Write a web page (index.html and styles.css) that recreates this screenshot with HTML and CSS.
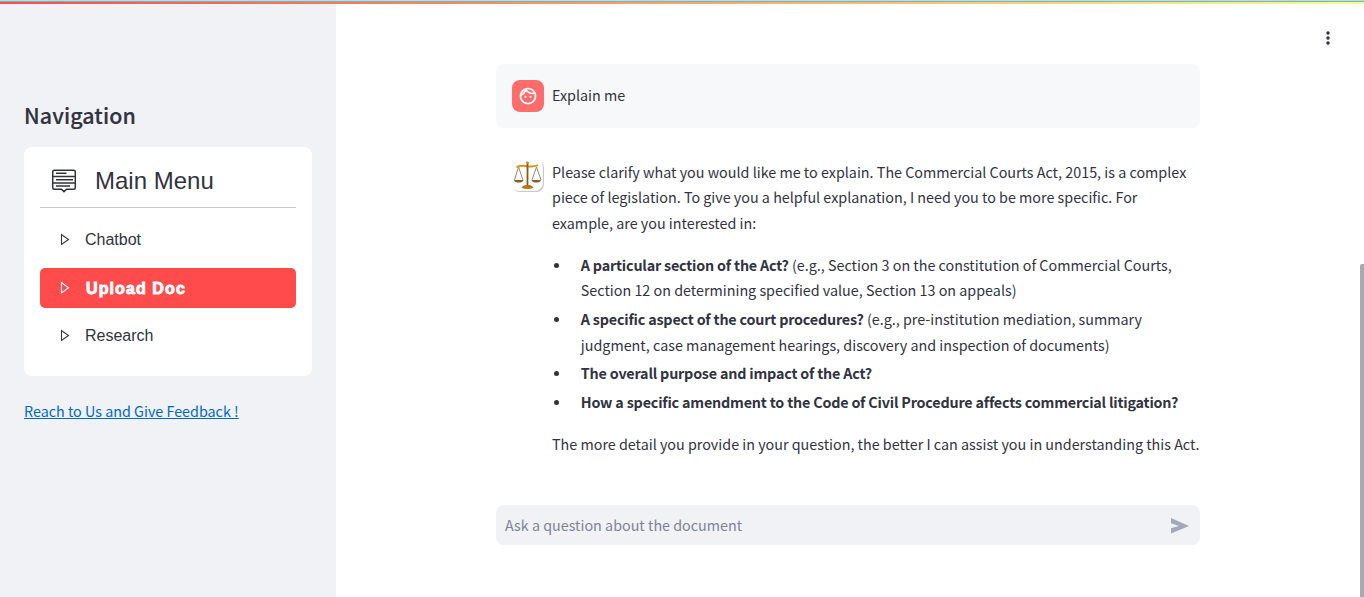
FILE: index.html
```html
<!DOCTYPE html>
<html lang="en">
<head>
<meta charset="utf-8">
<title>Chatbot</title>
<link rel="stylesheet" href="styles.css">
</head>
<body>
<div class="app">
  <div class="decoration"></div>
  <aside class="sidebar">
    <h2 class="sidebar-title">Navigation</h2>
    <nav class="menu">
      <div class="menu-header">
        <svg class="menu-icon" width="26" height="26" viewBox="0 0 26 26" fill="none" stroke="#31333f" stroke-width="1.5"><path d="M3.2 2.2h19.6q1.5 0 1.5 1.5v16q0 1.5-1.500 1.500h-7.300L13 23.600l-2.500-2.400H3.200q-1.500 0-1.500-1.500v-16q0-1.500 1.500-1.500zM1.700 8.500h22.600M1.700 15h22.600M5 5.300h10.500M5 11.800h17M5 18h14"/></svg>
        <span class="menu-title">Main Menu</span>
      </div>
      <hr class="menu-rule">
      <a class="menu-item"><svg class="caret" width="10" height="14" viewBox="0 0 10 14"><path d="M1.5 1.5v10L8.500 6.500z"/></svg>Chatbot</a>
      <a class="menu-item active"><svg class="caret" width="10" height="14" viewBox="0 0 10 14"><path d="M1.5 1.5v10.500L8.500 6.750z"/></svg><span class="label">Upload Doc</span></a>
      <a class="menu-item"><svg class="caret" width="10" height="14" viewBox="0 0 10 14"><path d="M1.5 1.5v10L8.500 6.500z"/></svg>Research</a>
    </nav>
    <a class="feedback">Reach to Us and Give Feedback !</a>
  </aside>
  <main class="main">
    <div class="toolbar">
      <svg width="16" height="16" viewBox="0 0 16 16" fill="#31333f"><circle cx="8" cy="3" r="1.750"/><circle cx="8" cy="8" r="1.750"/><circle cx="8" cy="13" r="1.750"/></svg>
    </div>
    <div class="chat">
      <section class="message user">
        <div class="avatar"><svg width="20" height="20" viewBox="0 0 24 24" fill="#fff"><path d="M10.25 13a1.25 1.25 0 1 1-2.5 0 1.25 1.25 0 0 1 2.5 0zM15 11.750a1.250 1.250 0 1 0 0 2.500 1.250 1.250 0 0 0 0-2.500zM22 12c0 5.520-4.480 10-10 10S2 17.520 2 12 6.480 2 12 2s10 4.480 10 10zM10.660 4.120C12.060 6.440 14.600 8 17.500 8c.46 0 .91-.05 1.340-.12C17.440 5.560 14.900 4 12 4c-.46 0-.91.050-1.340.120zM4.420 9.470a8.046 8.046 0 0 0 3.660-4.440A8.046 8.046 0 0 0 4.420 9.470zM20 12c0-.78-.12-1.530-.33-2.240-.7.150-1.420.240-2.170.240-3.130 0-5.920-1.440-7.760-3.690A10.016 10.016 0 0 1 4 11.860c.01.040 0 .090 0 .140 0 4.410 3.590 8 8 8s8-3.590 8-8z" fill-rule="evenodd"/></svg></div>
        <p class="text">Explain me</p>
      </section>
      <section class="message">
        <div class="avatar scales">
          <svg width="32" height="32" viewBox="0 0 32 32" fill="none">
            <path d="M6.500 7L2.500 20M6.500 7L11 20M24.500 7L20 20M24.500 7L29 20" stroke="#94795a" stroke-width=".9"/>
            <path d="M4.500 7q5.500-2 11-.8 5.500 1 10.500-1" stroke="#d9951c" stroke-width="1.900"/>
            <path d="M15.500 2v24" stroke="#8a5a16" stroke-width="1.800"/>
            <circle cx="15.500" cy="2.800" r="1.300" fill="#c98a22"/>
            <path d="M1.800 20h9.700q-1 2.600-4.800 2.600T1.800 20zM19.500 20h9.500q-1 2.600-4.700 2.600T19.500 20z" fill="#85602f"/>
            <path d="M9.500 27.800q1-2.400 4-2.800h4q3 .4 4 2.800-6 2.400-12 0z" fill="#b8740d"/>
          </svg>
        </div>
        <div class="text">
          <p>Please clarify what you would like me to explain. The Commercial Courts Act, 2015, is a complex<br>piece of legislation. To give you a helpful explanation, I need you to be more specific. For<br>example, are you interested in:</p>
          <ul>
            <li><b>A particular section of the Act?</b> (e.g., Section 3 on the constitution of Commercial Courts,<br>Section 12 on determining specified value, Section 13 on appeals)</li>
            <li><b>A specific aspect of the court procedures?</b> (e.g., pre-institution mediation, summary<br>judgment, case management hearings, discovery and inspection of documents)</li>
            <li><b>The overall purpose and impact of the Act?</b></li>
            <li><b>How a specific amendment to the Code of Civil Procedure affects commercial litigation?</b></li>
          </ul>
          <p>The more detail you provide in your question, the better I can assist you in understanding this Act.</p>
        </div>
      </section>
      <div class="chat-input">
        <span>Ask a question about the document</span>
        <svg width="20" height="18" viewBox="0 0 20 18" fill="#a3a8b8"><path d="M1 2v5.300L9 10l-8 2.300v5.200L19 10z"/></svg>
      </div>
    </div>
    <div class="scroll-thumb"></div>
  </main>
</div>
</body>
</html>
```
FILE: styles.css
```css
* { box-sizing: border-box; }
body {
  margin: 0;
  color: #31333f;
  background: #fff;
  font: 14.335px/25.600px "Noto Sans CJK SC", "Noto Sans", sans-serif;
}
p, h2, ul { margin: 0; padding: 0; }
.app { display: flex; position: relative; height: 597px; overflow: hidden; }
.decoration {
  position: absolute;
  top: 0; left: 0; right: 0;
  height: 4px;
  border-top: 1px solid #b5dfe7;
  background: linear-gradient(#7fb1b8, #7fb1b8) 0 0 / 100% 1px no-repeat, linear-gradient(90deg, #ff4b4b, #fffd80);
}
.sidebar { width: 336px; flex: none; padding: 97px 24px 0; background: #f0f2f6; }
.sidebar-title { font-size: 21.4px; line-height: 36px; font-weight: 500; letter-spacing: .1px; -webkit-text-stroke: .2px #31333f; }
.menu {
  height: 229px;
  margin-top: 14px;
  padding: 16px;
  border-radius: 8px;
  background: #fff;
  font-family: "Liberation Sans", Arial, sans-serif;
}
.menu-header { display: flex; align-items: center; height: 36px; padding-left: 11px; }
.menu-title { margin-left: 18px; font-size: 24px; }
.menu-rule { height: 1px; margin: 8px 0 12px; border: 0; background: #c8c8c8; }
.menu-item {
  display: flex;
  align-items: center;
  height: 40px;
  margin-bottom: 8px;
  padding-left: 20px;
  border-radius: 5px;
  font-size: 16px;
}
.caret { margin-right: 15px; fill: none; stroke: #31333f; stroke-width: 1.1; }
.active { background: #ff4b4b; color: #fff; font-weight: 700; }
.active .caret { stroke: #fff; }
.active .label { padding: 2px 0 0 1px; -webkit-text-stroke: .9px #fff; letter-spacing: 1.1px; }
.feedback { display: block; margin-top: 22px; color: #0068c9; text-decoration: underline; white-space: nowrap; }
.main { flex: 1; display: flex; justify-content: center; position: relative; padding-right: 4px; }
.toolbar { position: absolute; top: 30px; right: 28px; line-height: 0; }
.chat { width: 704px; padding-top: 64px; white-space: nowrap; }
.message { display: flex; gap: 8px; padding: 16px; }
.user { height: 64px; border-radius: 8px; background: #f7f8fa; }
.user .text { padding-top: 2px; }
.message + .message { margin-top: 16px; height: 345px; padding-top: 15px; }
.avatar {
  display: flex;
  flex: none;
  align-items: center;
  justify-content: center;
  width: 32px;
  height: 32px;
  border-radius: 8px;
  background: #ff6c6c;
}
.scales { margin-top: 1px; background: #fff; box-shadow: inset -1px -1px 1px #c4c4c4; }
.text p:first-child { margin-top: -.2px; }
.text ul { padding-left: 28.800px; margin: 16.200px 0 16.600px; list-style: none; }
.text li { position: relative; margin-bottom: 3px; }
.text li::before {
  content: "";
  position: absolute;
  top: 11px; left: -27px;
  width: 5px;
  height: 5px;
  border-radius: 50%;
  background: #31333f;
}
.text b { font-weight: 700; letter-spacing: -.19px; }
.chat-input {
  display: flex;
  align-items: center;
  justify-content: space-between;
  height: 40px;
  margin-top: 16px;
  padding: 0 10px 0 9px;
  border-radius: 8px;
  background: #f0f2f6;
  color: #808495;
}
.scroll-thumb {
  position: absolute;
  top: 264px; right: 0; bottom: 0;
  width: 4px;
  border-radius: 2px 0 0;
  background: #a9a9b0;
}
```
